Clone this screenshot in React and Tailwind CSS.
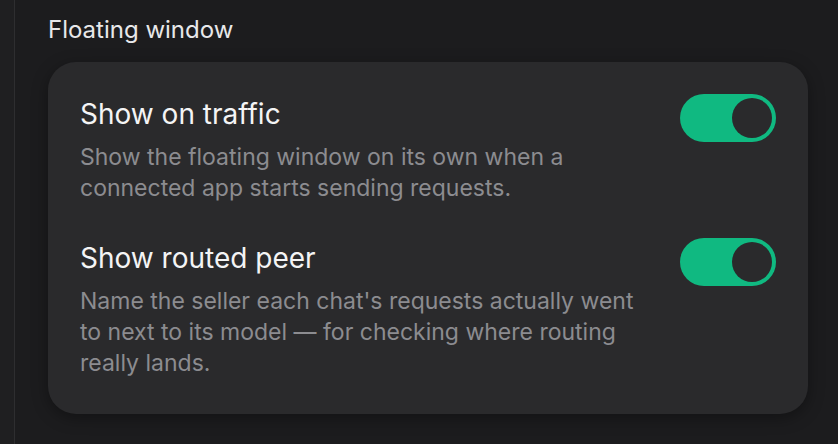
import React, { useState } from "react";

const settings = [
  {
    id: "traffic",
    title: "Show on traffic",
    description:
      "Show the floating window on its own when a connected app starts sending requests.",
  },
  {
    id: "peer",
    title: "Show routed peer",
    description:
      "Name the seller each chat's requests actually went to next to its model — for checking where routing really lands.",
  },
];

const Toggle = ({ checked, onChange }) => (
  <button
    onClick={onChange}
    className={`flex h-[48px] w-[96px] shrink-0 items-center rounded-full p-[4px] ${
      checked ? "justify-end bg-[#10b981]" : "justify-start bg-[#3a3a3c]"
    }`}
  >
    <span className="h-[40px] w-[40px] rounded-full bg-[#2a2a2c]" />
  </button>
);

export default function App() {
  const [values, setValues] = useState({ traffic: true, peer: true });

  return (
    <div
      className="flex h-[444px] w-full bg-[#1c1c1e]"
      style={{ fontFamily: "Inter, 'Noto Sans', sans-serif" }}
    >
      <div className="w-[15px] shrink-0 border-r border-[#2e2e30] bg-[#1f1f21]" />
      <div className="flex-1 pl-[33px] pr-[30px] pt-[16px]">
        <h2 className="text-[24px] leading-[28px] text-[#e8e8ea]">Floating window</h2>
        <div className="mt-[18px] flex flex-col gap-[34px] rounded-[28px] bg-[#2a2a2c] px-[32px] pb-[35px] pt-[32px] shadow-[0_4px_16px_rgba(0,0,0,0.35)]">
          {settings.map((s) => (
            <div key={s.id} className="flex items-start justify-between gap-8">
              <div className="max-w-[572px]">
                <div className="mt-[2px] text-[28px] leading-[36px] text-[#f4f4f5]">{s.title}</div>
                <p className="mt-[10px] text-[23px] leading-[31px] text-[#8c8c90]">
                  {s.description}
                </p>
              </div>
              <Toggle
                checked={values[s.id]}
                onChange={() => setValues({ ...values, [s.id]: !values[s.id] })}
              />
            </div>
          ))}
        </div>
      </div>
    </div>
  );
}
